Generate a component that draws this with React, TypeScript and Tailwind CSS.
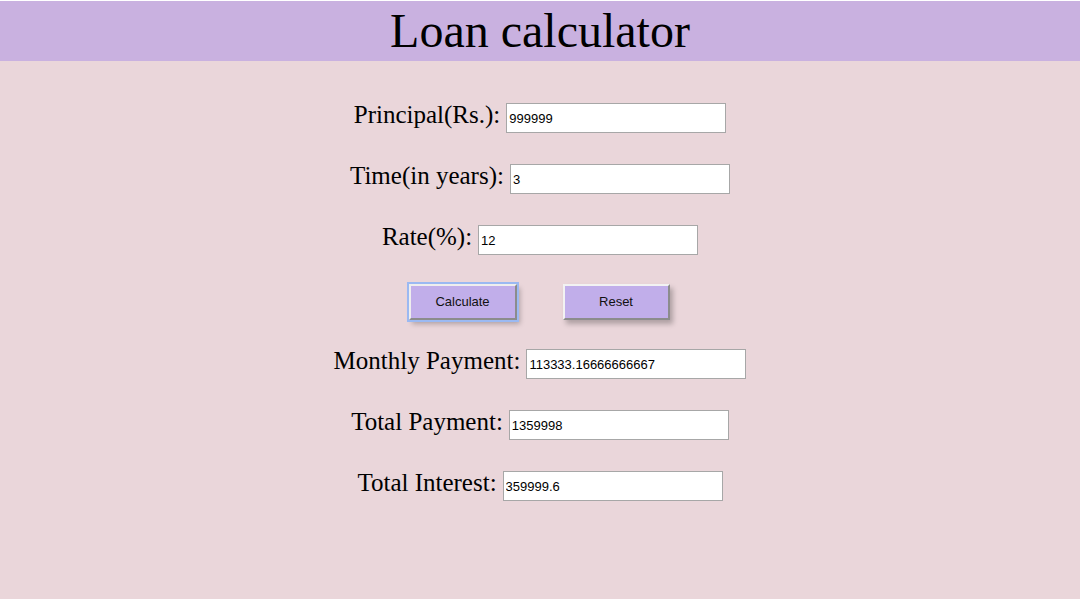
import { useState } from 'react';

const serif = { fontFamily: '"Liberation Serif", "Times New Roman", serif' };

function Field({ label, value, onChange }: { label: string; value: string; onChange?: (v: string) => void }) {
  return (
    <div className="flex items-baseline justify-center">
      <label className="text-[25px] leading-[20px] text-black mr-[6px]" style={serif}>{label}</label>
      <input
        value={value}
        onChange={(e) => onChange?.(e.target.value)}
        className="w-[220px] h-[30px] bg-white border border-[#a7a7a7] px-[2px] text-[13px] text-black font-['Liberation_Sans',Arial,sans-serif] outline-none"
      />
    </div>
  );
}

export default function App() {
  const [principal, setPrincipal] = useState('999999');
  const [years, setYears] = useState('3');
  const [rate, setRate] = useState('12');
  const [monthly, setMonthly] = useState('113333.16666666667');
  const [total, setTotal] = useState('1359998');
  const [interest, setInterest] = useState('359999.6');

  const calculate = () => {
    const p = parseFloat(principal);
    const t = parseFloat(years);
    const r = parseFloat(rate);
    const i = (p * t * r) / 100;
    const tp = p + i;
    setInterest(String(i));
    setTotal(String(Math.round(tp)));
    setMonthly(String(tp / (t * 12)));
  };

  const reset = () => {
    setPrincipal('');
    setYears('');
    setRate('');
    setMonthly('');
    setTotal('');
    setInterest('');
  };

  return (
    <div className="min-h-[599px] w-full bg-[#ead6da] border-t border-white">
      <header className="h-[60px] bg-[#c9b1e0] flex items-center justify-center">
        <h1 className="text-[48px] leading-none text-black" style={serif}>Loan calculator</h1>
      </header>

      <main className="flex flex-col items-center pt-[42px]">
        <Field label="Principal(Rs.):" value={principal} onChange={setPrincipal} />
        <div className="mt-[31px]">
          <Field label="Time(in years):" value={years} onChange={setYears} />
        </div>
        <div className="mt-[31px]">
          <Field label="Rate(%):" value={rate} onChange={setRate} />
        </div>

        <div className="flex gap-[46px] mt-[29px] pr-[2px]">
          <button
            onClick={calculate}
            className="w-[108px] h-[36px] bg-[#c1aeea] border-2 border-t-[#eee] border-l-[#eee] border-r-[#8c8c8c] border-b-[#8c8c8c] outline-2 outline-[#9bb9f2] shadow-[3px_4px_5px_rgba(0,0,0,0.25)] text-[13px] text-[#111] font-['Liberation_Sans',Arial,sans-serif]"
          >
            Calculate
          </button>
          <button
            onClick={reset}
            className="w-[107px] h-[36px] bg-[#c1aeea] border-2 border-t-[#f2f2f2] border-l-[#f2f2f2] border-r-[#8c8c8c] border-b-[#8c8c8c] shadow-[3px_4px_5px_rgba(0,0,0,0.25)] text-[13px] text-[#111] font-['Liberation_Sans',Arial,sans-serif]"
          >
            Reset
          </button>
        </div>

        <div className="mt-[29px]">
          <Field label="Monthly Payment:" value={monthly} />
        </div>
        <div className="mt-[31px]">
          <Field label="Total Payment:" value={total} />
        </div>
        <div className="mt-[31px]">
          <Field label="Total Interest:" value={interest} />
        </div>
      </main>
    </div>
  );
}
